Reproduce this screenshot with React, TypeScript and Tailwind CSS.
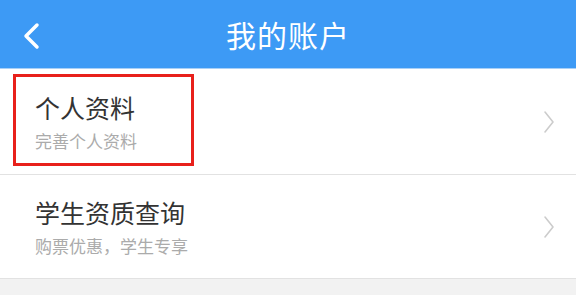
const font = { fontFamily: '"Noto Sans CJK SC", "Noto Sans", sans-serif' };

interface Item {
  title: string;
  desc: string;
  highlight?: boolean;
}

const items: Item[] = [
  { title: "个人资料", desc: "完善个人资料", highlight: true },
  { title: "学生资质查询", desc: "购票优惠，学生专享" },
];

const Chevron = () => (
  <svg width="12" height="24" viewBox="0 0 12 24" fill="none">
    <path d="M2 2 L10 12 L2 22" stroke="#cccccc" strokeWidth="1.6" strokeLinecap="round" strokeLinejoin="round" />
  </svg>
);

export default function App() {
  return (
    <div className="w-[576px] h-[295px] bg-[#f2f2f2] overflow-hidden" style={font}>
      <header className="relative h-[69px] bg-[#3d9af5] flex items-center justify-center border-b border-[#a9d0f7]">
        <svg className="absolute left-[22px] top-[22px]" width="18" height="28" viewBox="0 0 18 28" fill="none">
          <path d="M15 3 L4 14 L15 25" stroke="white" strokeWidth="3.5" strokeLinecap="round" strokeLinejoin="round" />
        </svg>
        <h1 className="text-white text-[30px] leading-none tracking-[1px]">我的账户</h1>
      </header>
      <ul className="bg-white">
        {items.map((item, i) => (
          <li
            key={item.title}
            className={`relative flex items-center justify-between pl-[35px] pr-[21px] ${
              i === 0 ? "h-[106px]" : "h-[104px]"
            } border-b border-[#e2e2e2]`}
          >
            <div className="flex flex-col">
              <span className="text-[25px] leading-none text-[#333]">{item.title}</span>
              <span className="mt-[12px] text-[17px] leading-none text-[#ababab]">{item.desc}</span>
            </div>
            <Chevron />
            {item.highlight && (
              <div className="absolute left-[13px] top-[5px] w-[181px] h-[92px] border-[3px] border-[#e8201b]" />
            )}
          </li>
        ))}
      </ul>
    </div>
  );
}
